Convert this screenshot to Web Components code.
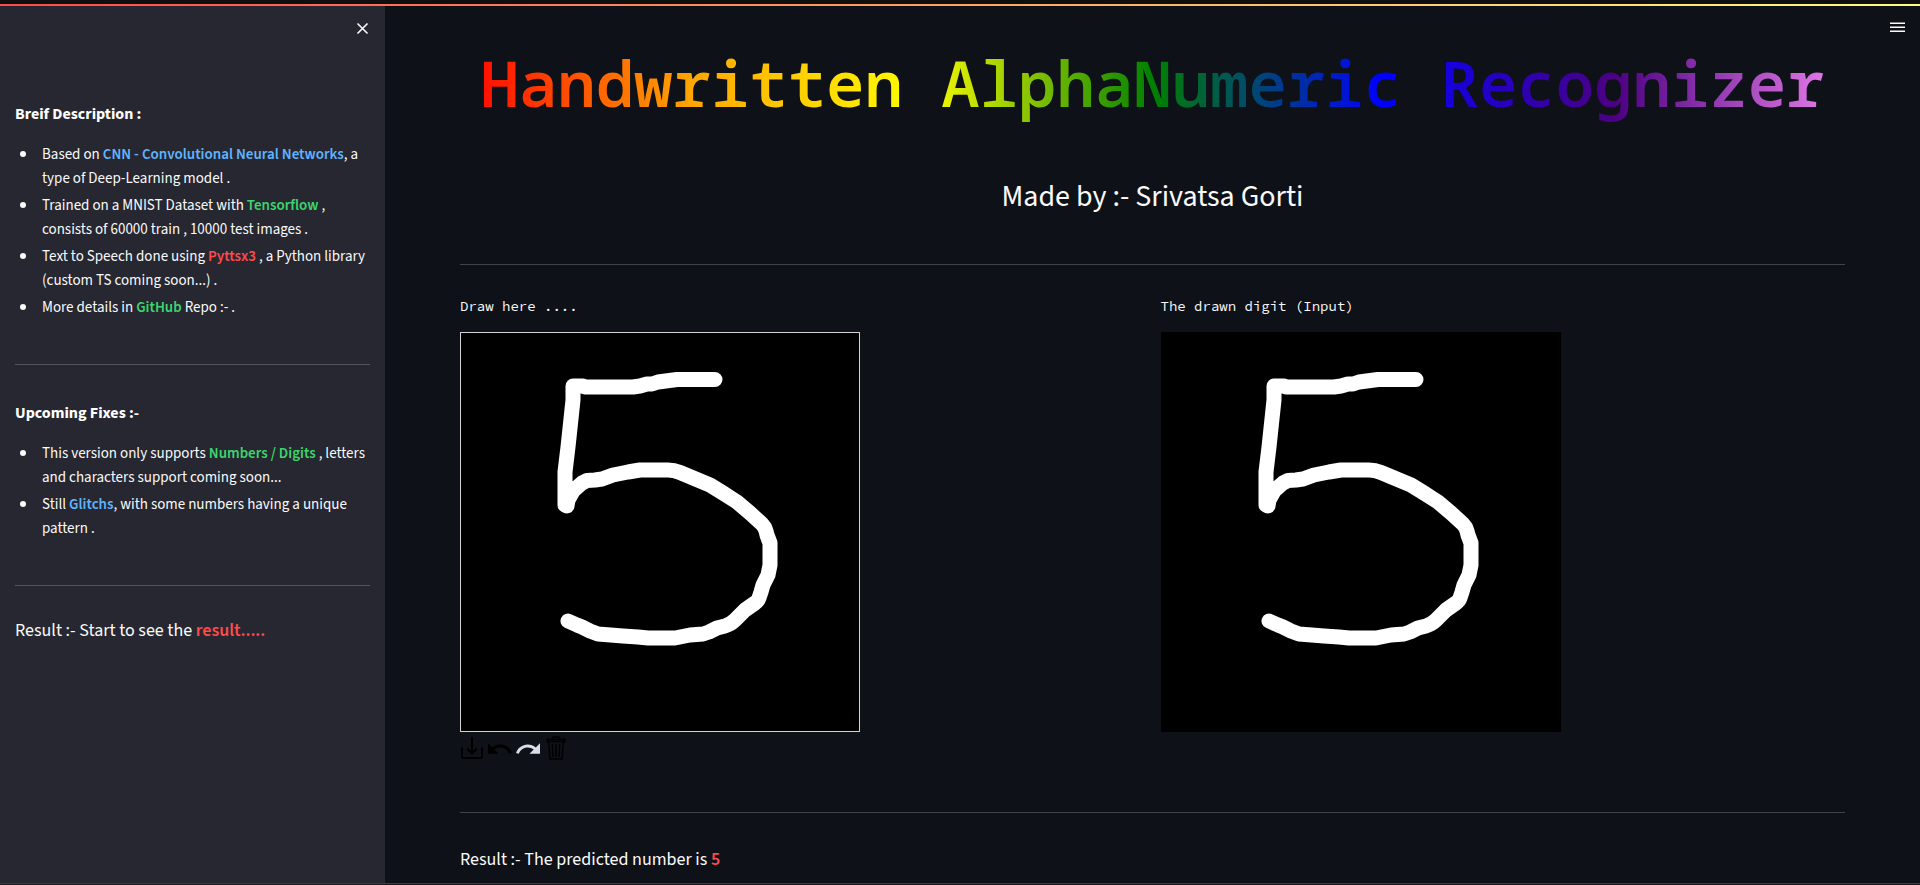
<!DOCTYPE html>
<html lang="en">
<head>
<meta charset="utf-8">
<meta name="viewport" content="width=device-width, initial-scale=1">
<title>Handwritten AlphaNumeric Recognizer</title>
<style>
  html { background: #0e1117; }
  body {
    margin: 0;
    color: #fafafa;
    font-family: "Source Sans 3", "Noto Sans CJK SC", "Noto Sans", sans-serif;
    --mono: "Source Code Pro", "Liberation Mono", monospace;
    --title: "Noto Sans Mono", "DejaVu Sans Mono", monospace;
    --red: #ff4b4b;
    --green: #3dd56d;
    --blue: #60b4ff;
  }
</style>
</head>
<body>
<app-shell>
  <side-panel slot="sidebar">
    <note-list heading="Breif Description :">
      <li>Based on <tint-text tone="blue">CNN - Convolutional Neural Networks</tint-text>, a type of Deep-Learning model .</li>
      <li>Trained on a MNIST Dataset with <tint-text tone="green">Tensorflow</tint-text> , consists of 60000 train , 10000 test images .</li>
      <li>Text to Speech done using <tint-text tone="red">Pyttsx3</tint-text> , a Python library (custom TS coming soon...) .</li>
      <li>More details in <tint-text tone="green">GitHub</tint-text> Repo :- .</li>
    </note-list>
    <rule-line></rule-line>
    <note-list heading="Upcoming Fixes :-">
      <li>This version only supports <tint-text tone="green">Numbers / Digits</tint-text> , letters and characters support coming soon...</li>
      <li>Still <tint-text tone="blue">Glitchs</tint-text>, with some numbers having a unique pattern .</li>
    </note-list>
    <rule-line></rule-line>
    <result-line>Result :- Start to see the <tint-text tone="red">result.....</tint-text></result-line>
  </side-panel>
  <rainbow-title>Handwritten AlphaNumeric Recognizer</rainbow-title>
  <by-line>Made by :- Srivatsa Gorti</by-line>
  <rule-line></rule-line>
  <pad-columns>
    <digit-pad label="Draw here ...." editable></digit-pad>
    <digit-pad label="The drawn digit (Input)"></digit-pad>
  </pad-columns>
  <rule-line></rule-line>
  <result-line>Result :- The predicted number is <tint-text tone="red">5</tint-text></result-line>
</app-shell>

<script>
const define = (name, html, setup) => {
  const template = document.createElement('template');
  template.innerHTML = html;
  customElements.define(name, class extends HTMLElement {
    constructor() {
      super();
      this.attachShadow({ mode: 'open' }).append(template.content.cloneNode(true));
    }
    connectedCallback() { if (setup) setup(this, this.shadowRoot); }
  });
};

define('app-shell', `
  <style>
    :host { display: flex; flex-direction: column; min-height: 100vh; }
    .edge { height: 4px; background: #0f0f10; }
    .accent { height: 2px; background: linear-gradient(90deg, #ff4b4b, #fffd80); }
    .body { display: flex; flex: 1; }
    main {
      flex: 1; min-width: 0; box-sizing: border-box; padding: 0 75px 12px;
      --rule-gap: 47px 0 33px; --result-gap: 5px;
    }
    header { display: flex; justify-content: flex-end; height: 37px; margin-right: -60px; }
    button { margin: 16px 0 0; padding: 0; width: 15px; height: 10px; border: 0; background: none; color: #fafafa; }
    svg { display: block; }
    footer { height: 1px; border-top: 1px solid #3c3c3f; background: #1d181c; }
  </style>
  <div class="edge"></div>
  <div class="accent"></div>
  <div class="body">
    <slot name="sidebar"></slot>
    <main>
      <header>
        <button type="button" aria-label="Main menu">
          <svg width="15" height="10" viewBox="0 0 15 10" fill="currentColor"><path d="M0 .6h15v1.4H0zM0 4.6h15v1.4H0zM0 8.6h15v1.4H0z"/></svg>
        </button>
      </header>
      <slot></slot>
    </main>
  </div>
  <footer></footer>`);

define('side-panel', `
  <style>
    :host { display: block; box-sizing: border-box; flex: 0 0 385px; padding: 16px 15px; background: #262730; }
    header { display: flex; justify-content: flex-end; height: 80px; }
    button { margin: 0 1px 0 0; padding: 0; width: 13px; height: 13px; border: 0; background: none; color: #fafafa; }
    svg { display: block; }
  </style>
  <header>
    <button type="button" aria-label="Close sidebar">
      <svg width="13" height="13" viewBox="0 0 13 13" fill="none" stroke="currentColor" stroke-width="1.6"><path d="M1.5 1.5l10 10M11.5 1.5l-10 10"/></svg>
    </button>
  </header>
  <slot></slot>`);

define('tint-text', `
  <style>
    :host { display: inline; }
    strong { font-weight: 600; color: var(--tone); }
  </style>
  <strong><slot></slot></strong>`,
  (host, root) => root.querySelector('strong').style.setProperty('--tone', `var(--${host.getAttribute('tone')})`));

define('note-list', `
  <style>
    :host { display: block; }
    h2 { margin: 0; font-size: 16px; line-height: 24px; font-weight: 700; color: #fff; }
    ul { margin: 17px 0 0; padding: 0 0 0 27px; list-style: none; }
    ::slotted(li) { margin: 0 0 3px; font-size: 15px; line-height: 24px; }
    ::slotted(li)::before {
      content: ""; display: inline-block; width: 6px; height: 6px; margin: 0 16px 0 -22px;
      border-radius: 50%; background: currentColor; vertical-align: 2px;
    }
  </style>
  <h2></h2>
  <ul><slot></slot></ul>`,
  (host, root) => { root.querySelector('h2').textContent = host.getAttribute('heading'); });

define('rule-line', `
  <style>
    :host { display: block; padding: var(--rule-gap, 41px 0 36px); }
    hr { margin: 0; border: 0; height: 1px; background: rgba(250, 250, 250, .22); }
  </style>
  <hr>`);

define('result-line', `
  <style>
    :host { display: block; padding-top: var(--result-gap, 0); }
    p { margin: 0; font-size: 18px; line-height: 18px; }
  </style>
  <p><slot></slot></p>`);

define('rainbow-title', `
  <style>
    :host { display: block; }
    h1 {
      margin: 0; text-align: center; font: 650 64px/80px var(--title);
      background: linear-gradient(to left, violet, indigo, blue, green, yellow, orange, red);
      -webkit-background-clip: text; background-clip: text; color: transparent;
    }
  </style>
  <h1><slot></slot></h1>`);

define('by-line', `
  <style>
    :host { display: block; padding-top: 54px; }
    p { margin: 0; text-align: center; font-size: 30px; line-height: 40px; }
  </style>
  <p><slot></slot></p>`);

define('pad-columns', `
  <style>
    :host { display: grid; grid-template-columns: 1fr 1fr; gap: 16px; }
  </style>
  <slot></slot>`);

define('digit-pad', `
  <style>
    :host { display: block; }
    figure { margin: 0; }
    figcaption { margin-bottom: 18px; font: 14px/16px var(--mono); }
    .pad { display: block; box-sizing: border-box; width: 100%; max-width: 400px; aspect-ratio: 1; background: #000; }
    :host([editable]) .pad { outline: 1px solid #d3d3d3; outline-offset: -1px; }
    .tools { display: none; gap: 4px; margin: 4px 0 5px; }
    :host([editable]) .tools { display: flex; }
    button { padding: 0; width: 24px; height: 24px; border: 0; background: none; color: #000; }
    .redo { color: #d9dce9; }
    .tools svg { display: block; }
  </style>
  <figure>
    <figcaption></figcaption>
    <svg class="pad" viewBox="0 0 400 400" role="img" aria-label="Handwritten digit">
      <path fill="none" stroke="#fff" stroke-width="15" stroke-linecap="round" stroke-linejoin="round"
        d="M255 47.500H217L198 50L192 52L187 52L180 54L173 55H125L123 54H113V68L108 115L105 140V173L107 174L108 168L113 159L122 151L127 148.500L135 148L142 147L153 143L168 140L180 138H208Q214 138 220 140.500L250 153L263 161L277 170L290 181L302 192Q305 195 306 199L307 203L310 211V233L308 243L303 253L301 260L299 266Q298 269 295 271L285 278L275 288Q271 292 265 294L257 296L249 300L243 302L230 303L215 306H188L178 305L163 304L138 302L130 299L122 295L117 293L108 289"/>
    </svg>
    <div class="tools">
      <button type="button" aria-label="Download">
        <svg width="24" height="24" viewBox="0 0 24 24" fill="none" stroke="currentColor" stroke-width="2"><path d="M2 11.500V21Q2 22 3 22H21Q22 22 22 21V11.500M12 1.500V17.500M7 12.500L12 17.500L17 12.500"/></svg>
      </button>
      <button type="button" aria-label="Undo">
        <svg width="24" height="24" viewBox="2 .75 20.5 20.5" fill="currentColor"><path d="M12.500 8c-2.650 0-5.050.990-6.900 2.600L2 7v9h9l-3.620-3.620c1.390-1.160 3.160-1.880 5.120-1.880 3.540 0 6.550 2.310 7.600 5.500l2.370-.780C21.080 11.030 17.150 8 12.500 8z"/></svg>
      </button>
      <button type="button" class="redo" aria-label="Redo">
        <svg width="24" height="24" viewBox="1.5 .75 20.5 20.5" fill="currentColor"><path d="M18.400 10.600C16.550 8.990 14.150 8 11.500 8c-4.650 0-8.580 3.030-9.960 7.220L3.900 16c1.050-3.190 4.050-5.500 7.600-5.500 1.950 0 3.730.720 5.120 1.880L13 16h9V7l-3.600 3.600z"/></svg>
      </button>
      <button type="button" aria-label="Clear">
        <svg width="24" height="24" viewBox="0 0 24 24" fill="none" stroke="currentColor" stroke-width="1.5" stroke-linejoin="round" stroke-linecap="round"><path d="M3 3.600H21V5.600H3ZM9 3.600V1H15V3.600M4.500 6L6 23H18L19.500 6M8.300 8.500L8.900 20.500M12 8.500V20.500M15.700 8.500L15.100 20.500"/></svg>
      </button>
    </div>
  </figure>`,
  (host, root) => { root.querySelector('figcaption').textContent = host.getAttribute('label'); });
</script>
</body>
</html>
